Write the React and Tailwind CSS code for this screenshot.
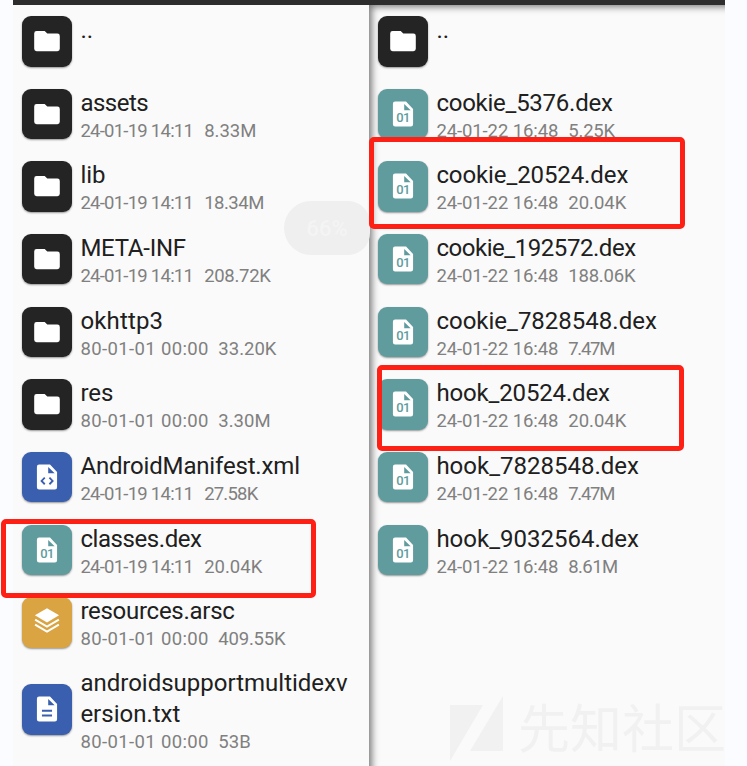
const COLORS = {
  folder: 'bg-[#242424]',
  code: 'bg-[#395fae]',
  text: 'bg-[#395fae]',
  dex: 'bg-[#609c9e]',
  layers: 'bg-[#d9a441]',
};

const D19 = { text: '24-01-19 14:11', track: 'tracking-[-0.75px] mr-[11px]' };
const D80 = { text: '80-01-01 00:00', track: 'tracking-[0.37px] mr-[9.5px]' };
const D22 = { text: '24-01-22 16:48', track: 'tracking-[-0.1px] mr-[10px]' };

const left = [
  { type: 'folder', name: '..' },
  { type: 'folder', name: 'assets', track: 'tracking-[-0.5px]', date: D19, size: '8.33M' },
  { type: 'folder', name: 'lib', date: D19, size: '18.34M', sizeTrack: 'tracking-[-0.5px]' },
  { type: 'folder', name: 'META-INF', track: 'tracking-[-0.25px]', date: D19, size: '208.72K', sizeTrack: 'tracking-[-0.3px]' },
  { type: 'folder', name: 'okhttp3', track: 'tracking-[0.15px]', date: D80, size: '33.20K' },
  { type: 'folder', name: 'res', date: D80, size: '3.30M' },
  { type: 'code', name: 'AndroidManifest.xml', track: 'tracking-[-0.17px]', date: D19, size: '27.58K', sizeTrack: 'tracking-[-0.8px]' },
  { type: 'dex', name: 'classes.dex', track: 'tracking-[-0.42px]', date: D19, size: '20.04K' },
  { type: 'layers', name: 'resources.arsc', track: 'tracking-[-0.27px]', date: D80, size: '409.55K', sizeTrack: 'tracking-[-0.2px]' },
  { type: 'text', name: 'androidsupportmultidexv\nersion.txt', date: D80, size: '53B', tall: true },
];

const right = [
  { type: 'folder', name: '..' },
  { type: 'dex', name: 'cookie_5376.dex', track: 'tracking-[-0.25px]', date: D22, size: '5.25K', sizeTrack: 'tracking-[-0.2px]' },
  { type: 'dex', name: 'cookie_20524.dex', track: 'tracking-[-0.1px]', date: D22, size: '20.04K' },
  { type: 'dex', name: 'cookie_192572.dex', track: 'tracking-[-0.45px]', date: D22, size: '188.06K', sizeTrack: 'tracking-[-0.2px]' },
  { type: 'dex', name: 'cookie_7828548.dex', date: D22, size: '7.47M', sizeTrack: 'tracking-[-1.3px]' },
  { type: 'dex', name: 'hook_20524.dex', track: 'tracking-[-0.15px]', date: D22, size: '20.04K' },
  { type: 'dex', name: 'hook_7828548.dex', date: D22, size: '7.47M', sizeTrack: 'tracking-[-1.3px]' },
  { type: 'dex', name: 'hook_9032564.dex', date: D22, size: '8.61M', sizeTrack: 'tracking-[-0.6px]' },
];

function Glyph({ type }) {
  if (type === 'folder') {
    return (
      <svg className="size-full" viewBox="0 0 50 50" fill="#fff">
        <path d="M14.5 15h8l2.6 2.4h10a2.4 2.4 0 0 1 2.4 2.4v12.8a2.4 2.4 0 0 1-2.4 2.4H14.5a2.4 2.4 0 0 1-2.4-2.4V17.4a2.4 2.4 0 0 1 2.4-2.4z" />
      </svg>
    );
  }
  if (type === 'layers') {
    return (
      <svg className="size-full" viewBox="0 0 50 50" fill="none">
        <path d="M24.8 11.2 36.8 18.2 24.8 25.4 12.8 18.2z" fill="#fff" />
        <path d="M13 22.5 24.8 29.4 36.6 22.5M13 27.4 24.8 34.3 36.6 27.4" stroke="#fff" strokeWidth="2" />
      </svg>
    );
  }
  return (
    <svg className="size-full" viewBox="0 0 50 50" fill="none">
      <path
        fillRule="evenodd"
        d="M17 12.5h10.8L34.8 19.8V35a2.2 2.2 0 0 1-2.2 2.2H17a2.2 2.2 0 0 1-2.2-2.2V14.7a2.2 2.2 0 0 1 2.2-2.2zM26 14.8v6.4h6.4z"
        fill="#fff"
      />
      {type === 'code' && <path d="M22.6 25.4 19.4 28.7 22.6 32M27.2 25.4 30.4 28.7 27.2 32" stroke="#395fae" strokeWidth="1.8" />}
      {type === 'text' && <path d="M19.8 26.6h10M19.8 31.2h10" stroke="#395fae" strokeWidth="2" />}
      {type === 'dex' && (
        <text x="24.9" y="33" textAnchor="middle" fontFamily="Roboto, sans-serif" fontWeight="500" fontSize="12.8" letterSpacing="-0.5" fill="#609c9e">
          01
        </text>
      )}
    </svg>
  );
}

function Row({ item }) {
  return (
    <div className={`flex shrink-0 items-center ${item.tall ? 'h-[101px]' : 'h-[72.67px]'}`}>
      <div className={`size-[50.4px] shrink-0 rounded-[9px] shadow-[0_1px_2px_rgba(0,0,0,0.4)] ${COLORS[item.type]}`}>
        <Glyph type={item.type} />
      </div>
      <div className={`ml-[8px] h-full whitespace-pre ${item.tall ? 'pt-[9px]' : 'pt-[10px]'}`}>
        <div className={`text-[24px] leading-[31px] text-[#202020] ${item.track ?? ''}`}>{item.name}</div>
        {item.date && (
          <div className="flex pt-[1px] text-[18.5px] leading-[22px] text-[#808080]">
            <span className={item.date.track}>{item.date.text}</span>
            <span className={item.sizeTrack}>{item.size}</span>
          </div>
        )}
      </div>
    </div>
  );
}

export default function App() {
  return (
    <div className="relative h-[766px] w-[747px] overflow-hidden bg-[#fbfcff] pl-[13px] font-[Roboto,sans-serif]">
      <div className="flex h-full w-[712px] flex-col bg-[#fafafa]">
        <div className="h-[5px] shrink-0 bg-[#2d2d2d]" />
        <div className="flex min-h-0 grow">
          <div className="w-[356px] shrink-0 pl-[9px]">
            {left.map((item) => <Row key={item.name} item={item} />)}
          </div>
          <div className="grow overflow-hidden pl-[9px] shadow-[inset_6px_5px_7px_-3px_rgba(0,0,0,0.5)]">
            {right.map((item) => <Row key={item.name} item={item} />)}
          </div>
        </div>
      </div>

      <div className="absolute top-[201px] left-[284px] flex h-[54px] w-[86px] items-center justify-center rounded-l-[27px] rounded-r-[22px] bg-[#efefef] text-[22px] font-medium text-[#f4f4f4]">
        66%
      </div>

      <div className="absolute top-[693px] left-[450px] flex h-[72px]">
        <svg className="h-[70px] w-[54px] shrink-0" viewBox="0 0 54 70" fill="#f1f1f1">
          <path d="M0 12h33L0 68zM53 3v55H20z" />
        </svg>
        <span className="ml-[14px] text-[52px] leading-[66px] whitespace-nowrap text-[#f1f1f1] font-['Noto_Sans_CJK_SC',sans-serif]">先知社区</span>
      </div>

      <div className="absolute top-[519px] left-[1px] h-[79px] w-[315px] rounded-[5px] border-[5px] border-[#ff2015]" />
      <div className="absolute top-[137px] left-[369px] h-[92px] w-[316px] rounded-[5px] border-[5px] border-[#ff2015]" />
      <div className="absolute top-[365px] left-[377px] h-[86px] w-[307px] rounded-[5px] border-[5px] border-[#ff2015]" />
    </div>
  );
}
